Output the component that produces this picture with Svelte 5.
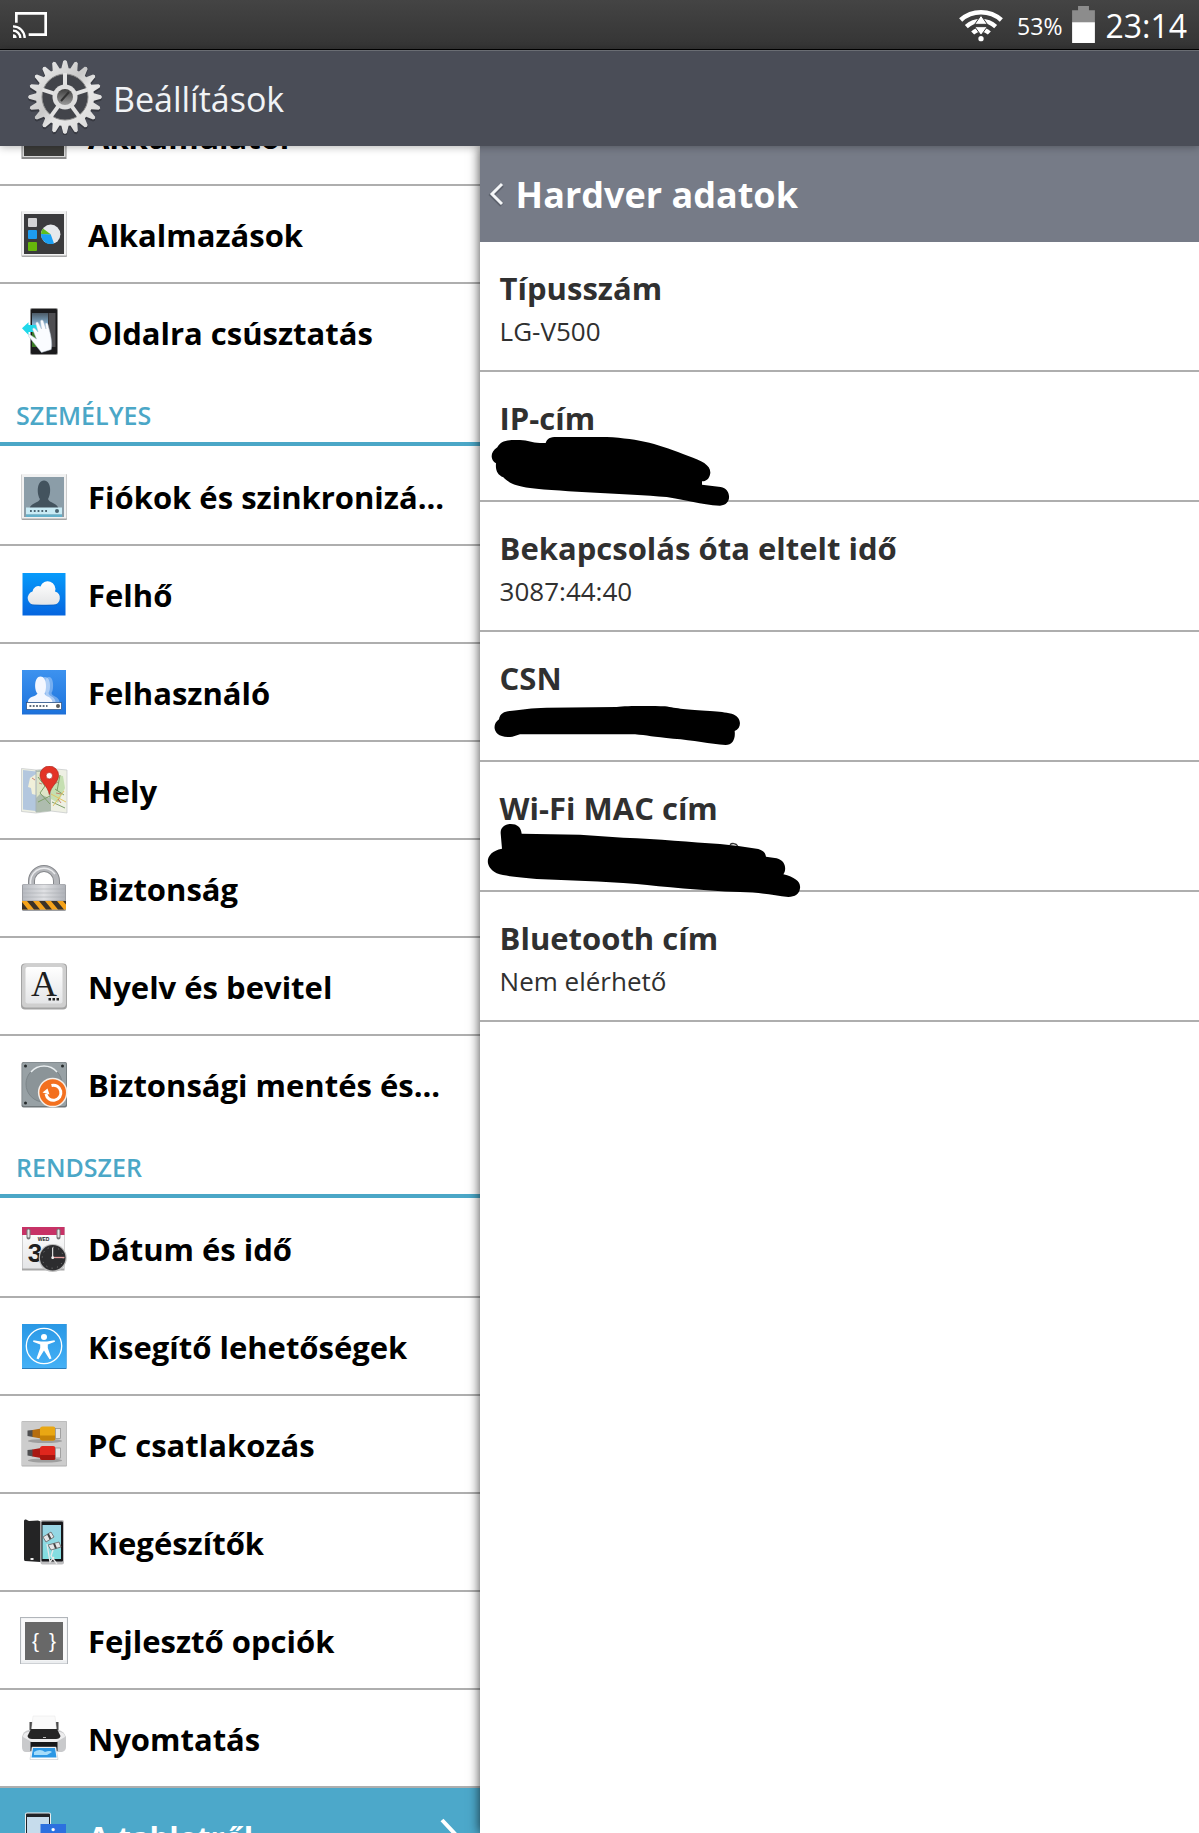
<script lang="ts">
    type Item = { id: string; label: string; active?: boolean };
    type Section = { title: string; items: Item[] };
    type Detail = { label: string; value?: string; scribble?: string };

    const sections: Section[] = [
        {
            title: "",
            items: [
                { id: "battery", label: "Akkumulátor" },
                { id: "apps", label: "Alkalmazások" },
                { id: "swipe", label: "Oldalra csúsztatás" },
            ],
        },
        {
            title: "SZEMÉLYES",
            items: [
                { id: "accounts", label: "Fiókok és szinkronizá..." },
                { id: "cloud", label: "Felhő" },
                { id: "users", label: "Felhasználó" },
                { id: "location", label: "Hely" },
                { id: "security", label: "Biztonság" },
                { id: "language", label: "Nyelv és bevitel" },
                { id: "backup", label: "Biztonsági mentés és..." },
            ],
        },
        {
            title: "RENDSZER",
            items: [
                { id: "date", label: "Dátum és idő" },
                { id: "access", label: "Kisegítő lehetőségek" },
                { id: "pc", label: "PC csatlakozás" },
                { id: "accessories", label: "Kiegészítők" },
                { id: "developer", label: "Fejlesztő opciók" },
                { id: "print", label: "Nyomtatás" },
                { id: "about", label: "A tabletről", active: true },
            ],
        },
    ];

    const details: Detail[] = [
        { label: "Típusszám", value: "LG-V500" },
        { label: "IP-cím", scribble: "ip" },
        { label: "Bekapcsolás óta eltelt idő", value: "3087:44:40" },
        { label: "CSN", scribble: "csn" },
        { label: "Wi-Fi MAC cím", scribble: "mac" },
        { label: "Bluetooth cím", value: "Nem elérhető" },
    ];

    // Outline of the gear, one tooth per step
    function gearPath(teeth: number, outer: number, inner: number) {
        const step = (Math.PI * 2) / teeth;
        const points: string[] = [];
        const add = (r: number, a: number) =>
            points.push(`${(38 + r * Math.sin(a)).toFixed(2)},${(38 - r * Math.cos(a)).toFixed(2)}`);
        for (let i = 0; i < teeth; i++) {
            const a = i * step;
            add(inner, a - step * 0.4);
            add(outer - 1, a - step * 0.16);
            add(outer, a);
            add(outer - 1, a + step * 0.16);
            add(inner, a + step * 0.4);
        }
        return `M${points.join("L")}Z`;
    }

    const gear = gearPath(20, 37, 29);
    const spokes = [0, 72, 144, 216, 288];
</script>

{#snippet itemIcon(id: string)}
    <svg class="icon" viewBox="0 0 48 48" aria-hidden="true">
        {#if id === "battery"}
            <rect x="1.5" y="1" width="45" height="46" fill="#8b8b8b" />
            <rect x="2.5" y="2" width="43" height="43" fill="#d8d8d8" />
            <rect x="4" y="4" width="40" height="40" fill="#3d3d3b" />
        {:else if id === "apps"}
            <rect x="1.5" y="1" width="45.5" height="46" rx="1" fill="#a9a9a9" />
            <rect x="2" y="1" width="44.5" height="44.5" fill="#f1f1f1" />
            <rect x="4" y="4" width="40" height="40" fill="#3b3b3d" />
            <rect x="8" y="8" width="9" height="9" rx="1" fill="#d3d3d5" />
            <rect x="8" y="20" width="9" height="9" rx="1" fill="#1d9cf0" />
            <rect x="8" y="32" width="9" height="9" rx="1" fill="#66b80b" />
            <circle cx="30.7" cy="24.3" r="9.7" fill="#e6e9ec" />
            <path d="M30.7 24.3L34 33.4A9.7 9.7 0 0 1 21 24Z" fill="#1ba0f3" />
            <path d="M30.7 24.3L21 24A9.7 9.7 0 0 1 23 18.5Z" fill="#5fbe1e" />
        {:else if id === "swipe"}
            <rect x="10" y="0" width="28" height="47" rx="2" fill="#8e8e8e" />
            <rect x="11" y="1" width="26" height="45" rx="1" fill="#1b1b1d" />
            <rect x="12" y="5" width="16" height="34" fill="url(#screen)" />
            <path d="M12 24h14v15H12z" fill="#397a24" />
            <rect x="28.5" y="5" width="7" height="34" fill="#4e4e52" />
            <path d="M2 20.3L8.500 14.2V17H18V24H8.500V27Z" fill="#20d8ea" />
            <path
                d="M21.5 44.5L31.2 41.5C32.5 36 31 30 30.6 27L28 16.5C27 14 25 15 25.5 17L26 21L23.3 13C22.5 11 20 12 20.5 14L21.5 21L18.5 15C17.5 13.2 15.2 14 16 16.5L18 24L15 20.5C13.5 19 12 20.5 13 22.5L16.5 31L10.5 27C8.500 25.8 8 28 9.500 29.5Z"
                fill="#fafcff"
                stroke="#aebccb"
                stroke-width="0.5"
            />
        {:else if id === "accounts"}
            <rect x="1.5" y="2" width="45.5" height="46" rx="1" fill="#a5a5a5" />
            <rect x="2" y="2" width="44.5" height="44.5" fill="#f1f1f1" />
            <rect x="4" y="5" width="40" height="40" fill="#8b9da8" />
            <path d="M9.500 37C10 31 19 31 20 27C17 23 16 9 24 8.500C32 9 31 23 28 27C29 31 38 31 38.5 37Z" fill="#43535e" />
            <rect x="6" y="35.5" width="36" height="7" fill="#c9ebf5" />
            <path d="M6 42.5h36v2.500H6z" fill="#64b1cb" />
            <path d="M10 39h19" stroke="#4c6572" stroke-width="1.8" stroke-dasharray="1.8 2" />
            <circle cx="37" cy="39" r="2" fill="#4c6572" />
        {:else if id === "cloud"}
            <rect x="2.5" y="3" width="43" height="42.5" fill="url(#blue)" />
            <path d="M14.500 34.8A6.800 6.800 0 0 1 12.500 21.500A6 6 0 0 1 20.5 16.5A7.500 7.500 0 0 1 35 21.5A6.800 6.800 0 0 1 33.500 34.8Z" fill="url(#paper)" />
            <path d="M11 34.8Q24 36.5 37 34.8" stroke="#0e53b0" stroke-width="1" fill="none" opacity="0.5" />
        {:else if id === "users"}
            <rect x="2" y="2" width="44" height="44.5" fill="#1f6fd6" />
            <rect x="2" y="2" width="44" height="43" fill="url(#blue2)" />
            <g fill="#f4f7ff">
                <path d="M18 34C18 28 24 29 26 26C23 22 24 9 29 9C34 9 34 22 31.5 25C32 29 39 28 39.5 34Z" opacity="0.35" />
                <path d="M14 34C14 28 20 29 23 26C20 22 20 9 25 9C31 9 31 22 28.5 25C29 29 35 28 35.5 34Z" opacity="0.45" />
                <path d="M8 34C8 28 16 29 17.5 25.5C14 22 14 8.500 20.5 8.500C27 8.500 27 22 24.5 25.5C25 29 31.5 28 32.5 34Z" />
            </g>
            <rect x="6.5" y="34.5" width="35" height="7" fill="#fff" stroke="#2c4a78" stroke-width="0.7" />
            <path d="M9.500 38h18" stroke="#5f6c7d" stroke-width="1.8" stroke-dasharray="1.8 1.5" />
            <circle cx="38" cy="38" r="2" fill="#5c5c5c" />
        {:else if id === "location"}
            <path d="M1.500 2.500L16 4L31 2.500L47 4V47L31 45L16 47L1.500 45.5Z" fill="#eef0e4" stroke="#c3c5c7" stroke-width="0.7" />
            <path d="M3 4L16 5.500V45L3 43.5Z" fill="#b3c7de" />
            <path d="M16 4.500L31 3V45L16 46.5Z" fill="#aebcae" />
            <path d="M10 12L16 8V29L12 28L11 22L8 21Z" fill="#f1f0da" />
            <path d="M16 6H24L22 14L29 23V32L20 28L16 32Z" fill="#dfe5c8" />
            <path d="M31 8L43 10L45 22L38 37L31 33Z" fill="#c5dfb1" />
            <path d="M18 11L25 20L20 27L30 38M32 36L45 42M35 23L44 29M18 36L30 30M40 9L37 25" stroke="#7d9e68" stroke-width="1" fill="none" />
            <path d="M31 28L46 36M33 40L44 25" stroke="#e2c564" stroke-width="1" fill="none" />
            <path d="M12 12l3 2M34 18l4-2M36 27l5 1M19 17l3 1M38 33l3 4" stroke="#c26a5c" stroke-width="0.8" />
            <path d="M16 4v42" stroke="#a4b1b8" />
            <path d="M29.3 28.5C28 20 20 16 20 9.300A9.300 9.300 0 0 1 38.6 9.300C38.6 16 31 20 29.3 28.5Z" fill="#e33326" stroke="#a51f18" stroke-width="0.6" />
            <circle cx="29.3" cy="9.7" r="3.2" fill="#fff" stroke="#a51f18" stroke-width="0.6" />
        {:else if id === "security"}
            <path d="M11.5 22V17A12.500 12.500 0 0 1 36.5 17V22" fill="none" stroke="#85878b" stroke-width="7" />
            <path d="M11.5 22V17A12.500 12.500 0 0 1 36.5 17V22" fill="none" stroke="#b5b7bb" stroke-width="5" />
            <path d="M10.5 22V17A13.500 13.500 0 0 1 35 10" fill="none" stroke="#eaebed" stroke-width="1.5" />
            <rect x="2" y="20" width="44" height="27" rx="1.5" fill="#9c9ea3" />
            <rect x="3" y="20.5" width="42" height="16" fill="url(#metal)" />
            <path d="M3 25h42M3 29h42M3 33h42" stroke="#a5a8ae" stroke-width="0.5" />
            <rect x="2" y="37" width="44" height="8.5" fill="#f5a31b" />
            <path d="M2 38L8 45.5H2ZM7 37H13L20 45.5H14ZM19 37H25L32 45.5H26ZM31 37H37L44 45.5H38ZM43 37H46V40.5Z" fill="#3b3228" />
        {:else if id === "language"}
            <rect x="1" y="1.5" width="46" height="46" rx="4" fill="#a3a3a3" />
            <rect x="2" y="2" width="44" height="43.5" rx="4" fill="#cfcfcf" />
            <rect x="5.5" y="5" width="37" height="36.5" rx="2" fill="url(#paper)" />
            <text x="24" y="34" class="glyph serif" font-size="36">A</text>
            <path d="M28.5 37.3h2.500M32.5 37.3h2.500M36.5 37.3h2.500" stroke="#222" stroke-width="2.5" />
        {:else if id === "backup"}
            <rect x="1.5" y="2" width="45.5" height="45.5" rx="2" fill="#70777a" />
            <rect x="2.2" y="2.5" width="44" height="43.5" rx="2" fill="#98a1a5" />
            <circle cx="24" cy="24" r="18" fill="#8b9498" stroke="#7c8589" />
            <path d="M11 12A17 17 0 0 1 37 12" stroke="#e9eef0" stroke-width="1.5" fill="none" />
            <g fill="#252a2c">
                <circle cx="5.5" cy="6" r="1.5" />
                <circle cx="42.5" cy="6" r="1.5" />
                <circle cx="5.5" cy="43" r="1.5" />
            </g>
            <circle cx="32.7" cy="32.5" r="14.8" fill="#f5f0eb" />
            <circle cx="32.7" cy="32.5" r="13.3" fill="#f3701f" />
            <path d="M31.500 25.500A7.500 7.500 0 1 1 26 34" fill="none" stroke="#fff" stroke-width="3" />
            <path d="M22.5 32.500L27.500 28.500L29.500 34.500Z" fill="#fff" />
        {:else if id === "date"}
            <rect x="2" y="3" width="42.5" height="43.5" fill="#a7a7a7" />
            <rect x="2.5" y="3" width="41.5" height="41.5" fill="url(#paper)" />
            <rect x="2" y="3" width="42.5" height="8" fill="#c73266" />
            <path d="M8.500 6.500v7M38.5 6.500v7" stroke="#777" stroke-width="4" stroke-linecap="round" />
            <path d="M8.500 6.500v6M38.5 6.500v6" stroke="#e4e4e4" stroke-width="2" stroke-linecap="round" />
            <text x="23.5" y="17" class="glyph" font-size="5" font-weight="700">WED</text>
            <text x="15" y="38" class="glyph" font-size="26" font-weight="700">3</text>
            <circle cx="32.7" cy="34" r="14" fill="#bcbcbc" />
            <circle cx="32.7" cy="33.7" r="12.8" fill="#2d2d2f" />
            <circle cx="32.7" cy="33.7" r="10.5" fill="none" stroke="#858585" stroke-dasharray="1 4.5" />
            <path d="M32.7 23.5V35" stroke="#fff" stroke-width="1" />
            <path d="M32 33.5H44.5" stroke="#e7a0a0" stroke-width="1.3" />
            <circle cx="32.7" cy="33.7" r="1.4" fill="#eee" />
        {:else if id === "access"}
            <rect x="2" y="2" width="44.5" height="45" fill="#2b7cbb" />
            <rect x="2" y="2" width="44.5" height="44" fill="url(#sky)" />
            <circle cx="24" cy="24" r="17.7" fill="none" stroke="#fff" stroke-width="1.3" />
            <circle cx="24" cy="15" r="3" fill="#fff" />
            <path d="M13.5 18.2L21 19.5H27L34.5 18.2L35 19.8L27.8 22.5V26L31.5 36.5L29.5 37.3L24 28.5L18.5 37.3L16.5 36.5L20.2 26V22.5L13 19.8Z" fill="#fff" />
        {:else if id === "pc"}
            <rect x="1.5" y="1" width="45.5" height="45.5" rx="1" fill="#afafaf" />
            <rect x="2" y="1.5" width="44.5" height="44" fill="#cdcdcd" />
            {#each [{ y: 0, a: "#e9a713", b: "#b56d10", c: "#c68308" }, { y: 19.5, a: "#e0261d", b: "#a81812", c: "#a8150f" }] as plug}
                <g transform="translate(0 {plug.y})">
                    <ellipse cx="25" cy="21" rx="17" ry="2" fill="#9e9e9e" />
                    <path d="M7.500 10.5L13 10V17L7.500 16Z" fill="#4e4e50" />
                    <path d="M12.5 10L21 8.500V18.5L12.5 17Z" fill={plug.b} />
                    <rect x="20" y="6.5" width="15.5" height="14" rx="2.5" fill={plug.a} />
                    <path d="M20 15.5H35.5V18A2.500 2.500 0 0 1 33 20.5H22.5A2.500 2.500 0 0 1 20 18Z" fill={plug.c} />
                    <rect x="35.5" y="8.5" width="5" height="10" fill="#e4e4e4" stroke="#8b8b8b" stroke-width="0.7" />
                </g>
            {/each}
        {:else if id === "accessories"}
            <path d="M4 3Q4 1 6 1.500L9 3L18 2.500L20.5 3.500V44L5 43Q4 43 4 41Z" fill="#242425" />
            <rect x="10.5" y="40" width="3" height="2" fill="#eee" />
            <rect x="20.5" y="2" width="23.5" height="44.5" rx="2" fill="#bdbdbf" />
            <rect x="21.5" y="3.5" width="21.5" height="40" rx="1" fill="#17171a" />
            <rect x="22.5" y="7" width="18.5" height="34" fill="url(#aqua)" />
            <path d="M23 19L31 14L34 19L26 24Z" fill="#e4e6e8" stroke="#77797b" />
            <path d="M28 27L39 24L41 29L31 32Z" fill="#e4e6e8" stroke="#77797b" />
            <path d="M28 16L30.5 21M34 25.5L36 30.5" stroke="#444" stroke-width="2" />
            <path d="M27 26L30 44L34 39M33 32L31 38L37 46" stroke="#e8e8e8" stroke-width="1.3" fill="none" />
        {:else if id === "developer"}
            <rect x="0.5" y="1.5" width="47" height="46.5" fill="#eceef0" stroke="#b1b5ba" />
            <rect x="1.5" y="2.5" width="45" height="42" fill="#f9f9fa" />
            <rect x="5" y="6" width="38" height="38" fill="#686868" />
            <text x="15.5" y="31.5" class="glyph light" font-size="21">&#123;</text>
            <text x="32.5" y="31.5" class="glyph light" font-size="21">&#125;</text>
        {:else if id === "print"}
            <path d="M11 8v9M37 8v9" stroke="#4b4b4b" stroke-width="3" />
            <path d="M13 2H35L36.5 16H11.500Z" fill="#fafafa" stroke="#e6e6e6" stroke-width="0.5" />
            <path d="M2 23Q3 17 9 16H38Q44 17 46 23V33Q46 37 42 38H6Q2 38 2 33Z" fill="#c9cacc" />
            <path d="M3 23Q3 19 8 18H40Q45 19 45 23L36 28H12Z" fill="#ededee" />
            <path d="M11 15H37L40.5 22Q40 25 36 25H12Q8 25 7.500 22Z" fill="#252525" />
            <path d="M10.5 28H37.5V37H10.5Z" fill="#17181a" />
            <path d="M23 23.5h3" stroke="#bbb" />
            <path d="M12 33H36L38 45.500H10Z" fill="#fff" stroke="#b8bcc0" stroke-width="0.5" />
            <path d="M13 34H35L36.5 43.5H11.500Z" fill="#2c97e4" />
            <path d="M14 38Q20 34 25 38Q30 36 32 38L27 41H14Z" fill="#a5dcfa" />
        {:else if id === "about"}
            <rect x="5" y="0.5" width="26" height="46" rx="2" fill="#eceff1" />
            <rect x="6" y="1.5" width="24" height="44" rx="1" fill="#202328" />
            <rect x="7" y="5" width="22" height="36" fill="#c6dcec" />
            <rect x="20.5" y="12" width="25.5" height="25" fill="#2c70df" />
            <text x="33" y="31" class="glyph light serif" font-size="21" font-weight="700">i</text>
        {/if}
    </svg>
{/snippet}

<svg class="defs" width="0" height="0" aria-hidden="true">
    <defs>
        <linearGradient id="blue" x2="0" y2="1"><stop stop-color="#079bfb" /><stop offset="1" stop-color="#0565df" /></linearGradient>
        <linearGradient id="blue2" x2="0" y2="1"><stop stop-color="#3d92ef" /><stop offset="1" stop-color="#1d73dc" /></linearGradient>
        <linearGradient id="sky" x2="0" y2="1"><stop stop-color="#2a98e5" /><stop offset="1" stop-color="#44b0f6" /></linearGradient>
        <linearGradient id="paper" x2="0" y2="1"><stop stop-color="#fff" /><stop offset="1" stop-color="#e4e5e7" /></linearGradient>
        <linearGradient id="screen" x2="0" y2="1"><stop stop-color="#4c5a66" /><stop offset="0.4" stop-color="#8fc4ea" /><stop offset="1" stop-color="#2872b3" /></linearGradient>
        <linearGradient id="aqua" x2="0" y2="1"><stop stop-color="#9bd4e5" /><stop offset="1" stop-color="#80dfe0" /></linearGradient>
        <linearGradient id="metal"><stop stop-color="#b8bbc1" /><stop offset="0.5" stop-color="#e0e1e4" /><stop offset="1" stop-color="#b0b3b9" /></linearGradient>
        <linearGradient id="steel" x2="1" y2="1"><stop stop-color="#f5f5f5" /><stop offset="0.45" stop-color="#c9c9c9" /><stop offset="0.6" stop-color="#e8e8e8" /><stop offset="1" stop-color="#d4d4d4" /></linearGradient>
        <linearGradient id="screw" x2="0" y2="1"><stop stop-color="#3f3f3f" /><stop offset="1" stop-color="#999" /></linearGradient>
    </defs>
</svg>

<div class="screen">
    <div class="status-bar">
        <svg class="cast" viewBox="36 33 108 84" aria-hidden="true">
            <path d="M49 68V40H137V104H86" fill="none" stroke="#fff" stroke-width="8" />
            <path d="M39 79A35 35 0 0 1 74 114M39 92A22 22 0 0 1 61 114" fill="none" stroke="#fff" stroke-width="7" />
            <path d="M39 103A11 11 0 0 1 50 114H39Z" fill="#fff" />
        </svg>
        <div class="status-right">
            <svg class="wifi" viewBox="110 20 141 111" aria-hidden="true">
                <path d="M118 62A92 92 0 0 1 240 62" fill="none" stroke="#fff" stroke-width="14" />
                <path d="M135 82A65 65 0 0 1 223 82M154 101A36 36 0 0 1 204 101" fill="none" stroke="#fff" stroke-width="13" />
                <circle cx="179" cy="118" r="8" fill="#fff" />
                <path d="M179 48L198 75H160ZM160 82H198L179 108Z" fill="#fff" stroke="#3a3a3a" stroke-width="3" />
            </svg>
            <span class="percent">53%</span>
            <svg class="battery" viewBox="450 20 69 112" aria-hidden="true">
                <path d="M450 33H468V20H501V33H519V69H450Z" fill="#8c8c8c" />
                <path d="M450 69H519V132H450Z" fill="#fff" />
            </svg>
            <span class="clock">23:14</span>
        </div>
    </div>

    <header class="app-bar">
        <svg class="gear" viewBox="0 0 76 76" aria-hidden="true">
            <path d={gear} fill="#24262b" opacity="0.5" transform="translate(0 2)" />
            <path d={gear} fill="url(#steel)" />
            <circle cx="38" cy="38" r="23" fill="#42444a" stroke="#8b8b8b" />
            {#each spokes as angle}
                <path d="M38 27V14" stroke="#e2e2e2" stroke-width="4" transform="rotate({angle} 38 38)" />
            {/each}
            <circle cx="38" cy="38" r="12.5" fill="#dedede" />
            <circle cx="38" cy="38" r="8" fill="url(#screw)" />
            <path d="M34 42L42 33" stroke="#333" stroke-width="2" />
        </svg>
        <h1>Beállítások</h1>
    </header>

    <div class="content">
        <nav class="sidebar">
            <div class="list">
                {#each sections as section}
                    {#if section.title}
                        <h2>{section.title}</h2>
                    {/if}
                    <ul>
                        {#each section.items as item}
                            <li>
                                <a href="#{item.id}" class="item" class:active={item.active}>
                                    {@render itemIcon(item.id)}
                                    <span class="label">{item.label}</span>
                                    {#if item.active}
                                        <svg class="chevron" viewBox="0 0 20 36" aria-hidden="true">
                                            <path d="M2 2L17 18L2 34" fill="none" stroke="#fff" stroke-width="4" />
                                        </svg>
                                    {/if}
                                </a>
                            </li>
                        {/each}
                    </ul>
                {/each}
            </div>
        </nav>

        <main class="detail">
            <div class="detail-bar">
                <button type="button" aria-label="Vissza">
                    <svg viewBox="0 0 18 26" aria-hidden="true">
                        <path d="M14 4L4 14L14 24" fill="none" stroke="#4d525c" stroke-width="5" opacity="0.6" />
                        <path d="M14 3L4 13L14 23" fill="none" stroke="#f4f6f8" stroke-width="3" />
                    </svg>
                </button>
                <h2>Hardver adatok</h2>
            </div>
            <dl>
                {#each details as detail}
                    <div class="entry">
                        <dt>{detail.label}</dt>
                        <dd>{detail.value ?? ""}</dd>
                        {#if detail.scribble === "ip"}
                            <svg class="scribble" viewBox="0 6 1080 390" aria-hidden="true">
                                <path d="M52 232C62 212 80 209 120 210C145 211 155 218 180 219H197C201 206 210 201 230 201H380C480 206 540 224 625 258C665 272 692 285 691 309C688 328 678 334 666 334V344L722 351C755 356 757 406 720 407C660 404 620 390 560 381C440 371 250 366 150 354C105 349 85 338 70 322C52 314 46 300 48 280C30 270 30 246 52 232Z" />
                            </svg>
                        {:else if detail.scribble === "csn"}
                            <svg class="scribble" viewBox="0 -54 1080 390" aria-hidden="true">
                                <path d="M57 208C60 190 72 185 90 183C130 178 150 174 200 173L410 171C440 167 520 168 555 169C590 175 620 180 690 183C720 184 735 188 755 191C787 200 786 235 764 243C767 268 757 285 737 285C690 282 640 270 580 266C520 261 500 256 465 253H120L97 260C40 268 32 225 57 208Z" />
                            </svg>
                        {:else if detail.scribble === "mac"}
                            <svg class="scribble" viewBox="0 336 1080 390" aria-hidden="true">
                                <path d="M62 550C61 532 75 522 92 522C112 522 123 532 125 551L300 554L430 563C540 567 630 576 720 582L775 588L835 597C850 602 856 608 858 620L890 625C918 632 920 660 910 673C945 682 963 695 960 715C958 732 945 741 925 741C880 736 840 727 780 726C660 722 550 710 470 702C360 694 270 691 170 687C120 682 80 680 50 670C10 650 15 605 66 596Z" />
                                <path d="M750 584C755 579 768 579 773 588" fill="none" stroke="#333" stroke-width="4" />
                            </svg>
                        {/if}
                    </div>
                {/each}
            </dl>
        </main>
    </div>
</div>

<style>
    :global(body) {
        margin: 0;
        overflow: hidden;
    }

    .screen {
        display: flex;
        flex-direction: column;
        height: 100vh;
        overflow: hidden;
        background: #fff;
        color: #000;
        font-family: "Open Sans", "Noto Sans", sans-serif;
    }

    h1,
    h2,
    ul,
    dl,
    dd {
        margin: 0;
        padding: 0;
    }

    ul {
        list-style: none;
    }

    svg {
        display: block;
        flex: none;
    }

    .defs {
        position: absolute;
    }

    .status-bar {
        display: flex;
        flex: none;
        align-items: center;
        justify-content: space-between;
        box-sizing: border-box;
        height: 50px;
        padding: 0 12px;
        background: linear-gradient(#444, #343434);
        border-bottom: 1px solid #000;
        color: #fff;
    }

    .status-right {
        display: flex;
        align-items: center;
    }

    .cast {
        width: 36px;
        height: 28px;
    }

    .wifi {
        width: 47px;
        height: 37px;
        margin-right: 12px;
    }

    .percent {
        padding-top: 2px;
        font-size: 23px;
    }

    .battery {
        width: 23px;
        height: 37px;
        margin: 0 10px;
    }

    .clock {
        padding-top: 2px;
        font-size: 32px;
        line-height: 40px;
    }

    .app-bar {
        position: relative;
        z-index: 2;
        display: flex;
        flex: none;
        align-items: center;
        box-sizing: border-box;
        height: 96px;
        padding: 0 27px 4px;
        background: #4a4d57;
        border-top: 1px solid #6a6d73;
        box-shadow: 0 1px 8px rgba(0, 0, 0, 0.3);
    }

    .gear {
        width: 76px;
        height: 76px;
    }

    h1 {
        padding-top: 4px;
        margin-left: 10px;
        color: #f1f3f6;
        font-size: 34px;
        font-weight: 400;
    }

    .content {
        display: flex;
        flex: 1;
        min-height: 0;
    }

    .sidebar {
        flex: 0 0 40%;
        overflow: hidden;
    }

    /* The list is scrolled: its first row is partly under the app bar */
    .list {
        margin-top: -58px;
    }

    .sidebar h2 {
        box-sizing: border-box;
        height: 66px;
        padding: 18px 16px 0;
        border-bottom: 4px solid #4ba7c7;
        color: #4ba7c7;
        font-size: 25px;
        font-weight: 600;
        line-height: 34px;
    }

    .sidebar h2 + ul {
        padding-top: 2px;
    }

    li + li {
        border-top: 2px solid #aeaeae;
    }

    .item {
        display: flex;
        align-items: center;
        gap: 20px;
        height: 96px;
        padding: 0 20px;
        color: #000;
        text-decoration: none;
    }

    .item.active {
        background: #4ca8ca;
        color: #fff;
    }

    .icon {
        width: 48px;
        height: 48px;
    }

    .glyph {
        fill: #1e1e1e;
        font-family: "Liberation Sans", sans-serif;
        text-anchor: middle;
    }

    .glyph.serif {
        font-family: "Liberation Serif", serif;
    }

    .glyph.light {
        fill: #fff;
    }

    .label {
        flex: 1;
        padding-top: 2px;
        font-size: 31px;
        font-weight: 700;
        line-height: 40px;
        white-space: nowrap;
    }

    .chevron {
        width: 20px;
        height: 36px;
    }

    .detail {
        position: relative;
        z-index: 1;
        flex: 1;
        min-width: 0;
        background: #fff;
        box-shadow: 0 0 11px rgba(0, 0, 0, 0.75);
    }

    .detail-bar {
        display: flex;
        align-items: center;
        height: 96px;
        padding: 0 8px;
        background: #767b87;
        color: #fff;
    }

    .detail-bar button {
        padding: 0;
        border: 0;
        background: none;
        cursor: pointer;
    }

    .detail-bar svg {
        width: 18px;
        height: 26px;
    }

    .detail-bar h2 {
        margin-left: 10px;
        font-size: 36px;
        font-weight: 700;
    }

    .entry {
        position: relative;
        box-sizing: border-box;
        height: 130px;
        padding: 26px 20px 0;
        border-bottom: 2px solid #aeaeae;
        color: #303030;
    }

    dt {
        font-size: 31px;
        font-weight: 700;
        line-height: 40px;
    }

    dd {
        margin-top: 6px;
        font-size: 26px;
        line-height: 34px;
    }

    .scribble {
        position: absolute;
        z-index: 1;
        top: 0;
        left: 0;
        width: 360px;
        height: 130px;
        overflow: visible;
    }
</style>
